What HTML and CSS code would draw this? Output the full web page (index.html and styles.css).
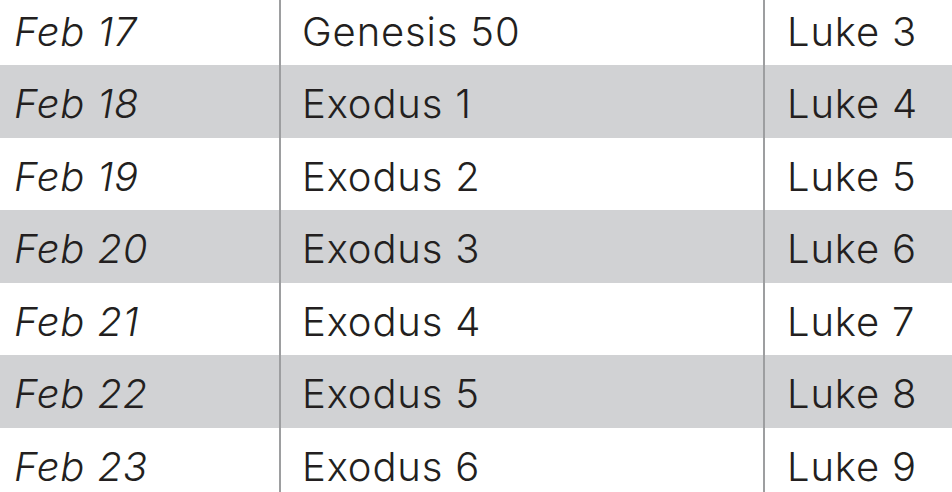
FILE: index.html
```html
<!DOCTYPE html>
<html>
<head>
<meta charset="utf-8">
<link rel="stylesheet" href="styles.css">
</head>
<body>
<div class="table">
  <div class="row"><div class="cell date">Feb 17</div><div class="cell ot">Genesis 50</div><div class="cell nt">Luke 3</div></div>
  <div class="row alt"><div class="cell date">Feb 18</div><div class="cell ot">Exodus 1</div><div class="cell nt">Luke 4</div></div>
  <div class="row"><div class="cell date">Feb 19</div><div class="cell ot">Exodus 2</div><div class="cell nt">Luke 5</div></div>
  <div class="row alt"><div class="cell date">Feb 20</div><div class="cell ot">Exodus 3</div><div class="cell nt">Luke 6</div></div>
  <div class="row"><div class="cell date">Feb 21</div><div class="cell ot">Exodus 4</div><div class="cell nt">Luke 7</div></div>
  <div class="row alt"><div class="cell date">Feb 22</div><div class="cell ot">Exodus 5</div><div class="cell nt">Luke 8</div></div>
  <div class="row"><div class="cell date">Feb 23</div><div class="cell ot">Exodus 6</div><div class="cell nt">Luke 9</div></div>
</div>
</body>
</html>
```
FILE: styles.css
```css
html, body {
  margin: 0;
  padding: 0;
  background: #ffffff;
  overflow: hidden;
}
.table {
  width: 952px;
  margin-top: -7.5px;
  display: flex;
  flex-direction: column;
  font-family: "Inter", "Lato", "Liberation Sans", sans-serif;
  font-weight: 300;
  font-size: 40px;
  color: #231f20;
}
.row {
  display: grid;
  grid-template-columns: 281px 484px 1fr;
  height: 72.5px;
}
.row.alt {
  background: #d1d2d4;
}
.cell {
  box-sizing: border-box;
  line-height: 72.5px;
  padding-top: 3px;
  white-space: nowrap;
  letter-spacing: 0.85px;
}
.date {
  font-style: italic;
  padding-left: 14px;
  border-right: 2px solid #9d9ea0;
}
.ot {
  padding-left: 21px;
  border-right: 2px solid #9d9ea0;
}
.nt {
  padding-left: 22px;
}
```
